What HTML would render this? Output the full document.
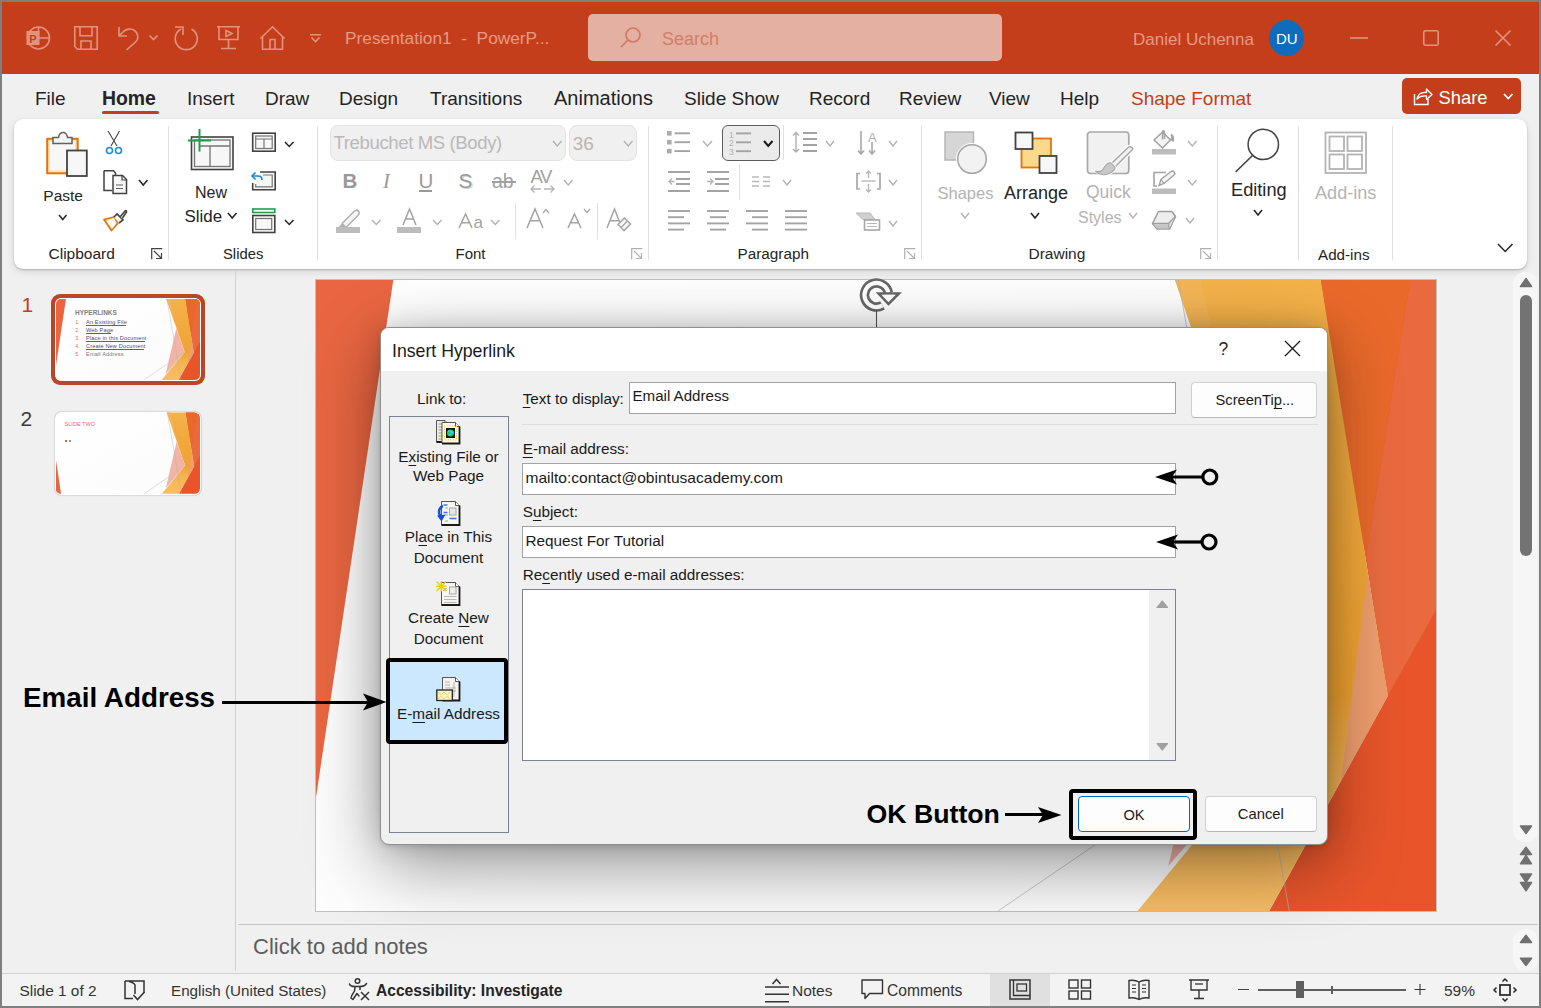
<!DOCTYPE html>
<html><head><meta charset="utf-8"><style>
*{box-sizing:border-box;margin:0;padding:0}
html,body{width:1541px;height:1008px;overflow:hidden;background:#f0f0f0;font-family:"Liberation Sans",sans-serif;color:#242424;position:relative}
.a{position:absolute}
.t{position:absolute;white-space:nowrap;line-height:1}
svg{position:absolute;overflow:visible}
u{text-decoration:underline;text-underline-offset:2.5px;text-decoration-thickness:1px}
.ti{stroke:#e2937e;fill:none;stroke-width:1.6}
</style></head><body>
<div class="a" style="left:0px;top:0px;width:1541px;height:74px;background:#c43e1c"></div>
<svg style="left:26px;top:26px;" width="24" height="24" viewBox="0 0 24 24"><circle cx="12.5" cy="12" r="11" class="ti"/><line x1="12.5" y1="1" x2="12.5" y2="12" class="ti"/><line x1="12.5" y1="12" x2="23.5" y2="12" class="ti"/><rect x="0.5" y="5" width="13" height="14" fill="#e2937e"/><text x="3.2" y="16.5" font-size="11" font-weight="bold" fill="#c43e1c" font-family="Liberation Sans">P</text></svg>
<svg style="left:74px;top:26px;" width="24" height="24" viewBox="0 0 24 24"><path d="M0.8 0.8H23.2V23.2H3.5L0.8 20.5Z" class="ti"/><path d="M6 0.8V9.8H18V0.8" class="ti"/><path d="M7 23.2V15H17V23.2" class="ti"/></svg>
<svg style="left:118px;top:26px;" width="24" height="24" viewBox="0 0 24 24"><path d="M1 1V10H9" class="ti"/><path d="M1 10L5.5 5.5C8 3 13 2 16.5 4.5C20.5 7.5 21 12 18 15.5L8.5 24" class="ti"/></svg>
<svg style="left:149px;top:35px;" width="9" height="6" viewBox="0 0 9 6"><path d="M0.5 0.5L4.5 4.5L8.5 0.5" class="ti"/></svg>
<svg style="left:174px;top:26px;" width="24" height="24" viewBox="0 0 24 24"><path d="M17.5 2A11 11 0 1 1 7 2" class="ti" transform="translate(0,1)"/><path d="M1 1H9V9" class="ti"/></svg>
<svg style="left:217px;top:26px;" width="24" height="24" viewBox="0 0 24 24"><path d="M0 0.8H23M2 0.8V13.5H21V0.8M11.5 13.5V22.5M4 22.5H19" class="ti"/><path d="M9 4.5L15 7.5L9 10.5Z" class="ti"/></svg>
<svg style="left:260px;top:26px;" width="25" height="24" viewBox="0 0 25 24"><path d="M0.5 12.5L12.5 0.8L24.5 12.5M2.5 11V23.2H22.5V11M10 23.2V13.5H15V23.2" class="ti"/></svg>
<svg style="left:310px;top:34px;" width="11" height="9" viewBox="0 0 11 9"><path d="M0 0.8H11M1.5 3.5L5.5 7.5L9.5 3.5" class="ti"/></svg>
<div class="t" style="left:345px;top:30.35px;font-size:17.3px;color:#e69a86;">Presentation1&nbsp; - &nbsp;PowerP...</div>
<div class="a" style="left:588px;top:14px;width:414px;height:47px;background:#e3b0a2;border-radius:5px"></div>
<svg style="left:620px;top:27px;" width="21" height="21" viewBox="0 0 21 21"><circle cx="13" cy="8" r="7" fill="none" stroke="#d07a64" stroke-width="1.7"/><line x1="8" y1="13" x2="1" y2="20" stroke="#d07a64" stroke-width="1.7"/></svg>
<div class="t" style="left:662px;top:29.76px;font-size:18px;color:#d27e68;">Search</div>
<div class="t" style="left:1133px;top:30.61px;font-size:17px;color:#e69a86;">Daniel Uchenna</div>
<div class="a" style="left:1269px;top:20px;width:35px;height:36px;border-radius:50%;background:#0f6cbd"></div>
<div class="t" style="left:1276px;top:30.80px;font-size:15px;color:#fff;">DU</div>
<svg style="left:1350px;top:37px;" width="18" height="2" viewBox="0 0 18 2"><line x1="0" y1="1" x2="18" y2="1" class="ti"/></svg>
<svg style="left:1423px;top:30px;" width="16" height="16" viewBox="0 0 16 16"><rect x="0.8" y="0.8" width="14.4" height="14.4" rx="1.5" class="ti"/></svg>
<svg style="left:1495px;top:30px;" width="16" height="16" viewBox="0 0 16 16"><path d="M0.5 0.5L15.5 15.5M15.5 0.5L0.5 15.5" class="ti"/></svg>
<div class="t" style="left:35px;top:88.91px;font-size:19px;color:#242424;">File</div>
<div class="t" style="left:102px;top:88.57px;font-size:19.4px;color:#242424;font-weight:bold;">Home</div>
<div class="t" style="left:187px;top:88.91px;font-size:19px;color:#242424;">Insert</div>
<div class="t" style="left:265px;top:88.91px;font-size:19px;color:#242424;">Draw</div>
<div class="t" style="left:339px;top:88.91px;font-size:19px;color:#242424;">Design</div>
<div class="t" style="left:430px;top:88.91px;font-size:19px;color:#242424;">Transitions</div>
<div class="t" style="left:554px;top:88.07px;font-size:20px;color:#242424;">Animations</div>
<div class="t" style="left:684px;top:88.91px;font-size:19px;color:#242424;">Slide Show</div>
<div class="t" style="left:809px;top:88.91px;font-size:19px;color:#242424;">Record</div>
<div class="t" style="left:899px;top:88.91px;font-size:19px;color:#242424;">Review</div>
<div class="t" style="left:989px;top:88.91px;font-size:19px;color:#242424;">View</div>
<div class="t" style="left:1060px;top:88.91px;font-size:19px;color:#242424;">Help</div>
<div class="t" style="left:1131px;top:88.91px;font-size:19px;color:#c43e1c;">Shape Format</div>
<div class="a" style="left:102px;top:110.5px;width:57px;height:3px;border-radius:2px;background:#c43e1c"></div>
<div class="a" style="left:1401.5px;top:77.5px;width:119.5px;height:36.5px;background:#c43e1c;border-radius:5px"></div>
<svg style="left:1413px;top:87px;" width="21" height="19" viewBox="0 0 21 19"><path d="M1.5 7V17.5H15V11.5" fill="none" stroke="#fff" stroke-width="1.4"/><path d="M4 12C5 7.5 8.5 5 13.5 5.5V2L19 7.5L13.5 12.5V9C9 8.5 6 10 4 12Z" fill="none" stroke="#fff" stroke-width="1.3" stroke-linejoin="round"/></svg>
<div class="t" style="left:1438.5px;top:88.62px;font-size:18.4px;color:#fff;">Share</div>
<svg style="left:1503px;top:93px;" width="10.5" height="6.5" viewBox="0 0 10.5 6.5"><path d="M1 1L5.25 5.5L9.5 1" fill="none" stroke="#fff" stroke-width="1.8"/></svg>
<div class="a" style="left:14px;top:119px;width:1513px;height:150px;background:#fff;border-radius:9px;box-shadow:0 1px 2px rgba(0,0,0,.22),0 3px 9px rgba(0,0,0,.1)"></div>
<div class="a" style="left:168px;top:126px;width:1px;height:134px;background:#e0e0e0"></div>
<div class="a" style="left:317px;top:126px;width:1px;height:134px;background:#e0e0e0"></div>
<div class="a" style="left:648px;top:126px;width:1px;height:134px;background:#e0e0e0"></div>
<div class="a" style="left:921px;top:126px;width:1px;height:134px;background:#e0e0e0"></div>
<div class="a" style="left:1217px;top:126px;width:1px;height:134px;background:#e0e0e0"></div>
<div class="a" style="left:1298px;top:126px;width:1px;height:134px;background:#e0e0e0"></div>
<div class="a" style="left:1392px;top:126px;width:1px;height:134px;background:#e0e0e0"></div>
<div class="t" style="left:48.5px;top:245.88px;font-size:15.5px;color:#242424;">Clipboard</div>
<div class="t" style="left:223px;top:246.97px;font-size:14.8px;color:#242424;">Slides</div>
<div class="t" style="left:455.5px;top:246.00px;font-size:15px;color:#242424;">Font</div>
<div class="t" style="left:737.5px;top:245.75px;font-size:15.3px;color:#242424;">Paragraph</div>
<div class="t" style="left:1028.5px;top:245.88px;font-size:15.5px;color:#242424;">Drawing</div>
<div class="t" style="left:1318px;top:246.63px;font-size:15.2px;color:#242424;">Add-ins</div>
<svg style="left:151px;top:248px;" width="12" height="12" viewBox="0 0 12 12"><path d="M0.7 11.3V0.7H11.3" fill="none" stroke="#424242" stroke-width="1.2"/><path d="M3 3L10.5 10.5M5 10.5H10.5V5" fill="none" stroke="#424242" stroke-width="1.2"/></svg>
<svg style="left:631px;top:248px;" width="12" height="12" viewBox="0 0 12 12"><path d="M0.7 11.3V0.7H11.3" fill="none" stroke="#b0b0b0" stroke-width="1.2"/><path d="M3 3L10.5 10.5M5 10.5H10.5V5" fill="none" stroke="#b0b0b0" stroke-width="1.2"/></svg>
<svg style="left:904px;top:248px;" width="12" height="12" viewBox="0 0 12 12"><path d="M0.7 11.3V0.7H11.3" fill="none" stroke="#b0b0b0" stroke-width="1.2"/><path d="M3 3L10.5 10.5M5 10.5H10.5V5" fill="none" stroke="#b0b0b0" stroke-width="1.2"/></svg>
<svg style="left:1200px;top:248px;" width="12" height="12" viewBox="0 0 12 12"><path d="M0.7 11.3V0.7H11.3" fill="none" stroke="#b0b0b0" stroke-width="1.2"/><path d="M3 3L10.5 10.5M5 10.5H10.5V5" fill="none" stroke="#b0b0b0" stroke-width="1.2"/></svg>
<svg style="left:1497px;top:243px;" width="17" height="10" viewBox="0 0 17 10"><path d="M1 1L8.2 8.5L15.5 1" fill="none" stroke="#242424" stroke-width="1.5"/></svg>
<svg style="left:44px;top:130px;" width="46" height="48" viewBox="0 0 46 48"><rect x="3.2" y="8.8" width="30.5" height="34.5" fill="#fce3a8" stroke="#e3740c" stroke-width="2"/><rect x="6" y="11.5" width="25" height="29" fill="#f7f7f7"/><path d="M9 13.5V7.5H14.5C15 4 17 2.5 19 2.5C21 2.5 23 4 23.5 7.5H28V13.5Z" fill="#f3f3f3" stroke="#616161" stroke-width="1.5"/><rect x="23" y="20.5" width="19.8" height="25.5" fill="#f7f7f7" stroke="#424242" stroke-width="1.8"/></svg>
<div class="t" style="left:43.3px;top:187.58px;font-size:15.5px;color:#242424;">Paste</div>
<svg style="left:57.5px;top:214px;" width="9.5" height="6.5" viewBox="0 0 9.5 6.5"><path d="M1 1L4.75 5.5L8.5 1" fill="none" stroke="#242424" stroke-width="1.5"/></svg>
<svg style="left:105px;top:130px;" width="20" height="26" viewBox="0 0 20 26"><path d="M3 1L12 16M14.5 1L6 16" fill="none" stroke="#424242" stroke-width="1.1"/><circle cx="4.5" cy="20.5" r="3" fill="none" stroke="#1b8cd8" stroke-width="1.6"/><circle cx="13.5" cy="20.5" r="3" fill="none" stroke="#1b8cd8" stroke-width="1.6"/></svg>
<svg style="left:103px;top:170px;" width="25" height="25" viewBox="0 0 25 25"><path d="M1 0.8H10.5L12.5 3V5M1 0.8V20.5H9" fill="none" stroke="#424242" stroke-width="1.5"/><path d="M10 5.5H19.5L23.5 9.5V23.5H10Z" fill="#f7f7f7" stroke="#424242" stroke-width="1.5"/><path d="M19 5.5V10H23.5" fill="none" stroke="#424242" stroke-width="1.2"/><path d="M13 15H20M13 18.5H20" stroke="#616161" stroke-width="1.2"/></svg>
<svg style="left:138px;top:179px;" width="10.5" height="7" viewBox="0 0 10.5 7"><path d="M1 1L5.25 6L9.5 1" fill="none" stroke="#242424" stroke-width="1.5"/></svg>
<svg style="left:103px;top:208px;" width="25" height="25" viewBox="0 0 25 25"><path d="M1 11.5L8.5 22.5L15 15L11 9Z" fill="#fcd385" stroke="#e3740c" stroke-width="1.8" stroke-linejoin="round"/><path d="M3.5 13L11 10L13 15.5L9 21Z" fill="#fff"/><path d="M11 9L14 6L20 12L16 15" fill="#f7f7f7" stroke="#424242" stroke-width="1.6"/><path d="M17 9L22 3C23 2 24 3 23.5 4L19.5 10" fill="#f7f7f7" stroke="#424242" stroke-width="1.6"/></svg>
<svg style="left:186px;top:128px;" width="50" height="44" viewBox="0 0 50 44"><rect x="5.5" y="9" width="41.5" height="32.5" fill="#f7f7f7" stroke="#424242" stroke-width="1.6"/><rect x="8.5" y="12" width="35.5" height="26.5" fill="#f7f7f7" stroke="#757575" stroke-width="1.3"/><path d="M14 18H44M24 18V38.5" stroke="#757575" stroke-width="1.3"/><path d="M2 12.5H25M13.5 1V23.5" stroke="#1f9e4b" stroke-width="2"/></svg>
<div class="t" style="left:195px;top:185.05px;font-size:16px;color:#242424;">New</div>
<div class="t" style="left:184.5px;top:208.59px;font-size:16.9px;color:#242424;">Slide</div>
<svg style="left:227px;top:212px;" width="10.5" height="7" viewBox="0 0 10.5 7"><path d="M1 1L5.25 6L9.5 1" fill="none" stroke="#242424" stroke-width="1.5"/></svg>
<svg style="left:251px;top:132px;" width="26" height="21" viewBox="0 0 26 21"><rect x="1.7" y="1.2" width="22.5" height="18" fill="#f7f7f7" stroke="#424242" stroke-width="1.6"/><rect x="4.7" y="4" width="16.5" height="12.5" fill="none" stroke="#757575" stroke-width="1.2"/><path d="M4.7 7H21M13 7V16.5" stroke="#757575" stroke-width="1.2"/></svg>
<svg style="left:284px;top:140.5px;" width="10.5" height="6.5" viewBox="0 0 10.5 6.5"><path d="M1 1L5.25 5.5L9.5 1" fill="none" stroke="#242424" stroke-width="1.5"/></svg>
<svg style="left:251px;top:170px;" width="26" height="22" viewBox="0 0 26 22"><path d="M9 2H24.2V19.8H1.7V13" fill="#f7f7f7" stroke="#424242" stroke-width="1.6"/><path d="M12 5H21.2V16.8H4.7V14" fill="none" stroke="#757575" stroke-width="1.2"/><path d="M1.5 6H7C9.5 6 11 7.8 11 10" fill="none" stroke="#1b8cd8" stroke-width="1.7"/><path d="M4.5 2.5L1 6L4.5 9.5" fill="none" stroke="#1b8cd8" stroke-width="1.7"/></svg>
<svg style="left:251px;top:208px;" width="26" height="26" viewBox="0 0 26 26"><rect x="1.8" y="1" width="22" height="3.5" fill="#fff" stroke="#1f9e4b" stroke-width="1.6"/><rect x="1.8" y="7.5" width="22" height="17" fill="#f7f7f7" stroke="#424242" stroke-width="1.6"/><rect x="4.7" y="10.5" width="16" height="11" fill="none" stroke="#757575" stroke-width="1.2"/></svg>
<svg style="left:284px;top:218.5px;" width="10.5" height="6.5" viewBox="0 0 10.5 6.5"><path d="M1 1L5.25 5.5L9.5 1" fill="none" stroke="#242424" stroke-width="1.5"/></svg>
<div class="a" style="left:330px;top:125px;width:236px;height:35.5px;background:#f0f0f0;border:1px solid #e3e3e3;border-radius:8px"></div>
<div class="t" style="left:333.5px;top:134.35px;font-size:18.6px;color:#b9b9b9;letter-spacing:-0.4px">Trebuchet MS (Body)</div>
<svg style="left:552px;top:140px;" width="10.5" height="7" viewBox="0 0 10.5 7"><path d="M1 1L5.25 6L9.5 1" fill="none" stroke="#b0b0b0" stroke-width="1.3"/></svg>
<div class="a" style="left:569px;top:125px;width:67.5px;height:35.5px;background:#f0f0f0;border:1px solid #e3e3e3;border-radius:8px"></div>
<div class="t" style="left:572.8px;top:134.01px;font-size:19px;color:#bdb5ae;">36</div>
<svg style="left:623px;top:140px;" width="10.5" height="7" viewBox="0 0 10.5 7"><path d="M1 1L5.25 6L9.5 1" fill="none" stroke="#b0b0b0" stroke-width="1.3"/></svg>
<div class="t" style="left:342.5px;top:170.64px;font-size:20.5px;color:#999;font-weight:bold;">B</div>
<div class="t" style="left:383px;top:170.64px;font-size:20.5px;color:#999;font-family:'Liberation Serif';font-style:italic">I</div>
<div class="t" style="left:418.5px;top:170.64px;font-size:20.5px;color:#999;">U</div>
<div class="a" style="left:418.5px;top:190px;width:13px;height:2px;background:#999"></div>
<div class="t" style="left:460px;top:172.14px;font-size:20.5px;color:#d6d6d6;">S</div>
<div class="t" style="left:458.5px;top:170.64px;font-size:20.5px;color:#999;">S</div>
<div class="t" style="left:492px;top:172.49px;font-size:19.5px;color:#a0a0a0;">ab</div>
<div class="a" style="left:491.5px;top:181px;width:24px;height:1.8px;background:#a0a0a0"></div>
<div class="t" style="left:530.5px;top:168.04px;font-size:18.5px;color:#a0a0a0;letter-spacing:-1.5px">AV</div>
<svg style="left:530px;top:184px;" width="26" height="10" viewBox="0 0 26 10"><path d="M1 5H11M4.5 1.5L1 5L4.5 8.5M14 5H24M20.5 1.5L24 5L20.5 8.5" fill="none" stroke="#b5b5b5" stroke-width="1.3"/></svg>
<svg style="left:563px;top:179px;" width="10.5" height="7" viewBox="0 0 10.5 7"><path d="M1 1L5.25 6L9.5 1" fill="none" stroke="#b0b0b0" stroke-width="1.3"/></svg>
<svg style="left:336px;top:208px;" width="25" height="26" viewBox="0 0 25 26"><path d="M6.5 15L18 3.5C19.5 2 21.5 2 22.5 3C23.5 4 23.5 6 22 7.5L10.5 19H6.5Z" fill="#f4f4f4" stroke="#b0b0b0" stroke-width="1.5"/><path d="M6.5 15L2 19.5H7.5L10.5 19" fill="#b0b0b0"/><rect x="0" y="19" width="24" height="6" fill="#bcbcbc"/></svg>
<svg style="left:371px;top:218.5px;" width="10.5" height="6.5" viewBox="0 0 10.5 6.5"><path d="M1 1L5.25 5.5L9.5 1" fill="none" stroke="#b0b0b0" stroke-width="1.3"/></svg>
<div class="a" style="left:397px;top:227.2px;width:24px;height:5.6px;background:#bcbcbc"></div>
<svg style="left:432px;top:218.5px;" width="10.5" height="6.5" viewBox="0 0 10.5 6.5"><path d="M1 1L5.25 5.5L9.5 1" fill="none" stroke="#b0b0b0" stroke-width="1.3"/></svg>
<svg style="left:490px;top:218.5px;" width="10.5" height="6.5" viewBox="0 0 10.5 6.5"><path d="M1 1L5.25 5.5L9.5 1" fill="none" stroke="#b0b0b0" stroke-width="1.3"/></svg>
<svg style="left:402px;top:208px;" width="15" height="18" viewBox="0 0 15 18"><path d="M1 17L7.5 1L14 17M3.6 10.92H11.4" fill="none" stroke="#a3a3a3" stroke-width="1.5"/></svg>
<svg style="left:458px;top:213px;" width="15" height="16" viewBox="0 0 15 16"><path d="M1 15L7.5 1L14 15M3.6 9.68H11.4" fill="none" stroke="#a3a3a3" stroke-width="1.5"/></svg>
<div class="t" style="left:473.5px;top:213.61px;font-size:17px;color:#a3a3a3;">a</div>
<svg style="left:526px;top:208px;" width="18" height="21" viewBox="0 0 18 21"><path d="M1 20L9.0 1L17 20M4.2 12.78H13.8" fill="none" stroke="#a3a3a3" stroke-width="1.5"/></svg>
<svg style="left:567px;top:213px;" width="15" height="16" viewBox="0 0 15 16"><path d="M1 15L7.5 1L14 15M3.6 9.68H11.4" fill="none" stroke="#a3a3a3" stroke-width="1.5"/></svg>
<svg style="left:606px;top:208px;" width="17" height="21" viewBox="0 0 17 21"><path d="M1 20L8.5 1L16 20M4.0 12.78H13.0" fill="none" stroke="#a3a3a3" stroke-width="1.5"/></svg>
<div class="a" style="left:515px;top:203px;width:1px;height:35.5px;background:#e0e0e0"></div>
<svg style="left:542px;top:208px;" width="8" height="6" viewBox="0 0 8 6"><path d="M1 5L4 1.5L7 5" fill="none" stroke="#a8a8a8" stroke-width="1.3"/></svg>
<svg style="left:583px;top:208px;" width="8" height="6" viewBox="0 0 8 6"><path d="M1 1L4 4.5L7 1" fill="none" stroke="#a8a8a8" stroke-width="1.3"/></svg>
<div class="a" style="left:597px;top:203px;width:1px;height:35.5px;background:#e0e0e0"></div>
<svg style="left:617px;top:217px;" width="15" height="15" viewBox="0 0 15 15"><path d="M7.5 1L13.5 7L7 13.5L1 7.5Z" fill="#f7f7f7" stroke="#a8a8a8" stroke-width="1.6"/><path d="M4 10.5L10.5 4" stroke="#a8a8a8" stroke-width="1.4"/></svg>
<svg style="left:666px;top:131px;" width="26" height="24" viewBox="0 0 26 24"><rect x="1" y="0.0" width="4.6" height="4.6" fill="#ababab"/><line x1="8.5" y1="2.3" x2="24" y2="2.3" stroke="#a3a3a3" stroke-width="1.9"/><rect x="1" y="8.9" width="4.6" height="4.6" fill="#ababab"/><line x1="8.5" y1="11.2" x2="24" y2="11.2" stroke="#a3a3a3" stroke-width="1.9"/><rect x="1" y="17.8" width="4.6" height="4.6" fill="#ababab"/><line x1="8.5" y1="20.1" x2="24" y2="20.1" stroke="#a3a3a3" stroke-width="1.9"/></svg>
<svg style="left:702px;top:140px;" width="11" height="7" viewBox="0 0 11 7"><path d="M1 1L5.5 6L10 1" fill="none" stroke="#b0b0b0" stroke-width="1.3"/></svg>
<div class="a" style="left:722px;top:125px;width:58px;height:35.5px;background:#ebebeb;border:1.2px solid #5c5c5c;border-radius:6px"></div>
<svg style="left:728px;top:130px;" width="26" height="26" viewBox="0 0 26 26"><text x="1" y="7.5" font-size="8.5" fill="#b0b0b0" font-family="Liberation Sans">1</text><line x1="8" y1="3.4" x2="23" y2="3.4" stroke="#a3a3a3" stroke-width="1.9"/><text x="1" y="16.4" font-size="8.5" fill="#b0b0b0" font-family="Liberation Sans">2</text><line x1="8" y1="12.3" x2="23" y2="12.3" stroke="#a3a3a3" stroke-width="1.9"/><text x="1" y="25.3" font-size="8.5" fill="#b0b0b0" font-family="Liberation Sans">3</text><line x1="8" y1="21.2" x2="23" y2="21.2" stroke="#a3a3a3" stroke-width="1.9"/></svg>
<svg style="left:763px;top:140px;" width="10.5" height="7" viewBox="0 0 10.5 7"><path d="M1 1L5.25 6L9.5 1" fill="none" stroke="#1a1a1a" stroke-width="2"/></svg>
<div class="a" style="left:783px;top:125px;width:1px;height:35px;background:#e0e0e0"></div>
<svg style="left:792px;top:131px;" width="26" height="24" viewBox="0 0 26 24"><path d="M4 1.5V21M1 4.5L4 1.5L7 4.5M1 18L4 21L7 18" fill="none" stroke="#b0b0b0" stroke-width="1.4"/><path d="M11 2H25M11 8H25M11 14H25M11 20H25" stroke="#a3a3a3" stroke-width="1.9"/></svg>
<svg style="left:825px;top:140px;" width="10" height="7" viewBox="0 0 10 7"><path d="M1 1L5.0 6L9 1" fill="none" stroke="#b0b0b0" stroke-width="1.3"/></svg>
<svg style="left:857px;top:130px;" width="24" height="26" viewBox="0 0 24 26"><path d="M4 1V24M1 20.5L4 24L7 20.5" fill="none" stroke="#a8a8a8" stroke-width="1.6"/><path d="M15 24V12M12 20.5L15 24L18 20.5" fill="none" stroke="#a8a8a8" stroke-width="1.6"/><text x="11" y="11.5" font-size="13" fill="#b0b0b0" font-family="Liberation Sans">A</text></svg>
<svg style="left:888px;top:140px;" width="10" height="7" viewBox="0 0 10 7"><path d="M1 1L5.0 6L9 1" fill="none" stroke="#b0b0b0" stroke-width="1.3"/></svg>
<svg style="left:668px;top:171px;" width="23" height="21" viewBox="0 0 23 21"><path d="M0 1H22M8 8H22M8 13H22M0 20H22" stroke="#a3a3a3" stroke-width="1.9"/><path d="M6.5 10.5H1M4 7.5L1 10.5L4 13.5" fill="none" stroke="#b5b5b5" stroke-width="1.4"/></svg>
<svg style="left:707px;top:171px;" width="23" height="21" viewBox="0 0 23 21"><path d="M0 1H22M8 8H22M8 13H22M0 20H22" stroke="#a3a3a3" stroke-width="1.9"/><path d="M0 10.5H5.5M3 7.5L6 10.5L3 13.5" fill="none" stroke="#b5b5b5" stroke-width="1.4"/></svg>
<div class="a" style="left:739px;top:164px;width:1px;height:36px;background:#e0e0e0"></div>
<svg style="left:752px;top:176px;" width="19" height="11" viewBox="0 0 19 11"><path d="M0 1H7M11 1H18M0 5.5H7M11 5.5H18M0 10H7M11 10H18" stroke="#b8b8b8" stroke-width="1.5"/></svg>
<svg style="left:781.5px;top:179px;" width="10" height="7" viewBox="0 0 10 7"><path d="M1 1L5.0 6L9 1" fill="none" stroke="#b0b0b0" stroke-width="1.3"/></svg>
<svg style="left:856px;top:170px;" width="25" height="23" viewBox="0 0 25 23"><path d="M4 3.5H1V19H4M21 3.5H24V19H21" fill="none" stroke="#a8a8a8" stroke-width="1.7"/><path d="M5.5 11H19.5" stroke="#b8b8b8" stroke-width="1.4"/><path d="M12.5 1V8M10 3.5L12.5 1L15 3.5M12.5 14V22M10 19.5L12.5 22L15 19.5" fill="none" stroke="#b8b8b8" stroke-width="1.4"/></svg>
<svg style="left:888px;top:179px;" width="10" height="7" viewBox="0 0 10 7"><path d="M1 1L5.0 6L9 1" fill="none" stroke="#b0b0b0" stroke-width="1.3"/></svg>
<svg style="left:668px;top:210px;" width="23" height="21" viewBox="0 0 23 21"><line x1="0" y1="1.0" x2="22" y2="1.0" stroke="#a3a3a3" stroke-width="1.9"/><line x1="0" y1="7.2" x2="16" y2="7.2" stroke="#a3a3a3" stroke-width="1.9"/><line x1="0" y1="13.4" x2="22" y2="13.4" stroke="#a3a3a3" stroke-width="1.9"/><line x1="0" y1="19.6" x2="16" y2="19.6" stroke="#a3a3a3" stroke-width="1.9"/></svg>
<svg style="left:707px;top:210px;" width="23" height="21" viewBox="0 0 23 21"><line x1="0.0" y1="1.0" x2="22.0" y2="1.0" stroke="#a3a3a3" stroke-width="1.9"/><line x1="3.0" y1="7.2" x2="19.0" y2="7.2" stroke="#a3a3a3" stroke-width="1.9"/><line x1="0.0" y1="13.4" x2="22.0" y2="13.4" stroke="#a3a3a3" stroke-width="1.9"/><line x1="3.0" y1="19.6" x2="19.0" y2="19.6" stroke="#a3a3a3" stroke-width="1.9"/></svg>
<svg style="left:746px;top:210px;" width="23" height="21" viewBox="0 0 23 21"><line x1="0" y1="1.0" x2="22" y2="1.0" stroke="#a3a3a3" stroke-width="1.9"/><line x1="6" y1="7.2" x2="22" y2="7.2" stroke="#a3a3a3" stroke-width="1.9"/><line x1="0" y1="13.4" x2="22" y2="13.4" stroke="#a3a3a3" stroke-width="1.9"/><line x1="6" y1="19.6" x2="22" y2="19.6" stroke="#a3a3a3" stroke-width="1.9"/></svg>
<svg style="left:785px;top:210px;" width="23" height="21" viewBox="0 0 23 21"><line x1="0" y1="1.0" x2="22" y2="1.0" stroke="#a3a3a3" stroke-width="1.9"/><line x1="0" y1="7.2" x2="22" y2="7.2" stroke="#a3a3a3" stroke-width="1.9"/><line x1="0" y1="13.4" x2="22" y2="13.4" stroke="#a3a3a3" stroke-width="1.9"/><line x1="0" y1="19.6" x2="22" y2="19.6" stroke="#a3a3a3" stroke-width="1.9"/></svg>
<svg style="left:855px;top:212px;" width="26" height="19" viewBox="0 0 26 19"><path d="M1 1H15L20 7.5H8Z" fill="#d0d0d0" stroke="#b8b8b8" stroke-width="1"/><rect x="9.5" y="8" width="15" height="10" fill="#fff" stroke="#a8a8a8" stroke-width="1.6"/><path d="M12 11.5H22M12 14.5H22" stroke="#b8b8b8" stroke-width="1.2"/></svg>
<svg style="left:888px;top:220px;" width="10" height="7" viewBox="0 0 10 7"><path d="M1 1L5.0 6L9 1" fill="none" stroke="#b0b0b0" stroke-width="1.3"/></svg>
<svg style="left:944px;top:131px;" width="32" height="44" viewBox="0 0 32 44"><rect x="1" y="1" width="28.5" height="28" fill="#d6d6d6" stroke="#b3b3b3" stroke-width="1.4"/><circle cx="28" cy="28" r="16" fill="#fff"/><circle cx="28" cy="28" r="14.3" fill="#f2f2f2" stroke="#a6a6a6" stroke-width="1.5"/></svg>
<div class="t" style="left:937.5px;top:185.33px;font-size:16.5px;color:#b3b3b3;">Shapes</div>
<svg style="left:960px;top:212px;" width="10" height="7" viewBox="0 0 10 7"><path d="M1 1L5.0 6L9 1" fill="none" stroke="#b0b0b0" stroke-width="1.3"/></svg>
<svg style="left:1014px;top:131px;" width="44" height="44" viewBox="0 0 44 44"><rect x="7.5" y="7.5" width="29.5" height="29" fill="#fad98c" stroke="#e3740c" stroke-width="1.8"/><rect x="1.5" y="1.5" width="17" height="16.5" fill="#f7f7f7" stroke="#424242" stroke-width="1.8"/><rect x="25.5" y="25" width="17" height="17" fill="#f7f7f7" stroke="#424242" stroke-width="1.8"/></svg>
<div class="t" style="left:1004px;top:184.06px;font-size:18px;color:#242424;">Arrange</div>
<svg style="left:1030px;top:212px;" width="10" height="7" viewBox="0 0 10 7"><path d="M1 1L5.0 6L9 1" fill="none" stroke="#242424" stroke-width="1.6"/></svg>
<svg style="left:1086px;top:130px;" width="50" height="50" viewBox="0 0 50 50"><rect x="1.5" y="2" width="41.3" height="41.5" rx="3" fill="#f1f1f1" stroke="#a8a8a8" stroke-width="1.7"/><path d="M46 17.5C47 18 47 19 46 20L29 37L25 34L42 17.5C43.5 16.5 45 16.8 46 17.5Z" fill="#f1f1f1" stroke="#fff" stroke-width="4"/><path d="M46 17.5C47 18 47 19 46 20L29 37L25 34L42 17.5C43.5 16.5 45 16.8 46 17.5Z" fill="#f1f1f1" stroke="#a8a8a8" stroke-width="1.5"/><path d="M25 33C20 32 19 37 16.5 40C14.5 42 12 42 9.5 41C12 44 17 45.5 22 44C27 42.5 29.5 39 29 37Z" fill="#c9c9c9" stroke="#fff" stroke-width="2.5"/><path d="M25 33C20 32 19 37 16.5 40C14.5 42 12 42 9.5 41C12 44 17 45.5 22 44C27 42.5 29.5 39 29 37Z" fill="#c9c9c9" stroke="#a8a8a8" stroke-width="1.2"/></svg>
<div class="t" style="left:1086px;top:184.48px;font-size:17.5px;color:#b3b3b3;">Quick</div>
<div class="t" style="left:1078px;top:209.65px;font-size:16px;color:#b3b3b3;">Styles</div>
<svg style="left:1128px;top:212px;" width="10" height="7" viewBox="0 0 10 7"><path d="M1 1L5.0 6L9 1" fill="none" stroke="#b0b0b0" stroke-width="1.3"/></svg>
<svg style="left:1151px;top:130px;" width="26" height="26" viewBox="0 0 26 26"><path d="M3 10L11.5 2L19.5 10L11.5 18Z" fill="#f4f4f4" stroke="#a3a3a3" stroke-width="1.6" stroke-linejoin="round"/><path d="M11.5 9.5V1.5C11.5 0.5 13.5 0.5 13.5 1.5V9" fill="none" stroke="#a3a3a3" stroke-width="1.5"/><path d="M19.5 10C21 8 21.5 6 20 4.5C21.5 5 23.5 7 22 11.5" fill="#a3a3a3" stroke="#a3a3a3" stroke-width="1.4"/><rect x="1" y="19" width="24" height="5.5" fill="#bcbcbc"/></svg>
<svg style="left:1187px;top:140px;" width="10.5" height="7" viewBox="0 0 10.5 7"><path d="M1 1L5.25 6L9.5 1" fill="none" stroke="#b0b0b0" stroke-width="1.3"/></svg>
<svg style="left:1151px;top:170px;" width="26" height="26" viewBox="0 0 26 26"><path d="M15 2.5H3V16H6" fill="none" stroke="#a3a3a3" stroke-width="1.6"/><path d="M8 15.5L10 9.5L20 1.5C21 0.8 22.5 1 23.2 2C24 3 23.8 4.2 23 5L13 13.5Z" fill="#f4f4f4" stroke="#a3a3a3" stroke-width="1.4"/><path d="M10 9.5L13 13.5" stroke="#a3a3a3" stroke-width="1.2"/><rect x="1" y="18.5" width="24" height="5.5" fill="#bcbcbc"/></svg>
<svg style="left:1187px;top:179px;" width="10.5" height="7" viewBox="0 0 10.5 7"><path d="M1 1L5.25 6L9.5 1" fill="none" stroke="#b0b0b0" stroke-width="1.3"/></svg>
<svg style="left:1151px;top:210px;" width="26" height="22" viewBox="0 0 26 22"><path d="M1.5 13.5L7.5 1.5H21L24.5 6.5L18.5 19H6Z" fill="#eeeeee" stroke="#9e9e9e" stroke-width="1.6" stroke-linejoin="round"/><path d="M1.5 13.5H17.5L24.5 6.5" fill="none" stroke="#9e9e9e" stroke-width="1.6"/><path d="M2.3 14.3L6 18.2H18L17.2 14.3Z" fill="#c6c6c6"/><path d="M17.5 13.5L18.5 19" stroke="#9e9e9e" stroke-width="1.4"/><path d="M18.3 14L23.6 7.5L18.5 18Z" fill="#dcdcdc"/></svg>
<svg style="left:1185px;top:217px;" width="10" height="7" viewBox="0 0 10 7"><path d="M1 1L5.0 6L9 1" fill="none" stroke="#b0b0b0" stroke-width="1.3"/></svg>
<svg style="left:1234px;top:128px;" width="46" height="46" viewBox="0 0 46 46"><circle cx="29.3" cy="16.4" r="15.2" fill="none" stroke="#424242" stroke-width="1.5"/><line x1="18.5" y1="27.5" x2="1.6" y2="44" stroke="#424242" stroke-width="1.6"/></svg>
<div class="t" style="left:1231px;top:180.59px;font-size:18.2px;color:#242424;">Editing</div>
<svg style="left:1252.5px;top:209px;" width="10" height="7" viewBox="0 0 10 7"><path d="M1 1L5.0 6L9 1" fill="none" stroke="#242424" stroke-width="1.6"/></svg>
<svg style="left:1324px;top:131px;" width="44" height="44" viewBox="0 0 44 44"><rect x="1.5" y="1.5" width="40.5" height="40.5" fill="#fff" stroke="#b3b3b3" stroke-width="1.8"/><rect x="5.5" y="5.5" width="14.5" height="14.5" fill="none" stroke="#b3b3b3" stroke-width="1.8"/><rect x="23.5" y="5.5" width="14.5" height="14.5" fill="none" stroke="#b3b3b3" stroke-width="1.8"/><rect x="5.5" y="23.5" width="14.5" height="14.5" fill="none" stroke="#b3b3b3" stroke-width="1.8"/><rect x="23.5" y="23.5" width="14.5" height="14.5" fill="none" stroke="#b3b3b3" stroke-width="1.8"/></svg>
<div class="t" style="left:1315px;top:183.87px;font-size:18.1px;color:#b3b3b3;">Add-ins</div>
<div class="a" style="left:235px;top:271px;width:1px;height:700px;background:#d0d0d0"></div>
<div class="a" style="left:238px;top:924px;width:1300px;height:1px;background:#c8c8c8"></div>
<div class="t" style="left:253px;top:936.07px;font-size:22px;color:#5c5c5c;">Click to add notes</div>
<div class="a" style="left:1513px;top:272px;width:25px;height:570px;background:#f6f6f6;border-radius:12px"></div>
<svg style="left:1519px;top:277px;" width="14" height="11" viewBox="0 0 14 11"><path d="M7 1.5L12.5 9.5H1.5Z" fill="#707070" stroke="#707070" stroke-width="1.5" stroke-linejoin="round"/></svg>
<div class="a" style="left:1520px;top:295px;width:12px;height:261px;background:#737373;border-radius:6px"></div>
<svg style="left:1519px;top:825px;" width="14" height="10" viewBox="0 0 14 10"><path d="M7 8.5L12.5 1H1.5Z" fill="#707070" stroke="#707070" stroke-width="1.5" stroke-linejoin="round"/></svg>
<svg style="left:1519px;top:846px;" width="14" height="20" viewBox="0 0 14 20"><path d="M7 1.2L12.5 8.5H1.5Z M7 9.5L12.5 17.8H1.5Z" fill="#707070" stroke="#707070" stroke-width="1.5" stroke-linejoin="round"/></svg>
<svg style="left:1519px;top:872px;" width="14" height="20" viewBox="0 0 14 20"><path d="M7 18.8L12.5 10.5H1.5Z M7 10L12.5 2H1.5Z" fill="#707070" stroke="#707070" stroke-width="1.5" stroke-linejoin="round"/></svg>
<div class="a" style="left:1513px;top:929px;width:25px;height:42px;background:#f6f6f6;border-radius:12px"></div>
<svg style="left:1519px;top:934px;" width="14" height="10" viewBox="0 0 14 10"><path d="M7 1.2L12.5 8.5H1.5Z" fill="#707070" stroke="#707070" stroke-width="1.5" stroke-linejoin="round"/></svg>
<svg style="left:1519px;top:957px;" width="14" height="10" viewBox="0 0 14 10"><path d="M7 8.5L12.5 1.2H1.5Z" fill="#707070" stroke="#707070" stroke-width="1.5" stroke-linejoin="round"/></svg>
<div class="a" style="left:0px;top:973px;width:1541px;height:35px;background:#f3f3f3;border-top:1px solid #d2d2d2"></div>
<div class="t" style="left:19.5px;top:982.76px;font-size:15.4px;color:#333;">Slide 1 of 2</div>
<svg style="left:124px;top:980px;" width="22" height="21" viewBox="0 0 22 21"><path d="M1 1H20V13M1 1V18.5H9M5 1.5C8 2 10 3 11 5V14" fill="none" stroke="#333" stroke-width="1.5"/><path d="M9.5 15L13.5 19.5L20.5 12" fill="none" stroke="#333" stroke-width="1.6"/></svg>
<div class="t" style="left:171px;top:982.93px;font-size:15.2px;color:#333;">English (United States)</div>
<svg style="left:348px;top:978px;" width="22" height="23" viewBox="0 0 22 23"><circle cx="9.5" cy="3" r="2.3" fill="none" stroke="#333" stroke-width="1.5"/><path d="M1.5 6C2 8 4.5 8.5 7 8.5L6.5 13C5.5 15 3.5 17 3 20L5 21.5C6.5 19 8 17 9 15.5L11 18M12 8.5C14.5 8.5 17 8 18.5 5.5" fill="none" stroke="#333" stroke-width="1.5" stroke-linecap="round" stroke-linejoin="round"/><path d="M7 8.5H12L12 12" fill="none" stroke="#333" stroke-width="1.5"/><path d="M13 14L21 22M21 14L13 22" stroke="#333" stroke-width="1.5"/></svg>
<div class="t" style="left:376px;top:982.59px;font-size:15.6px;color:#242424;font-weight:bold;">Accessibility: Investigate</div>
<svg style="left:764px;top:978px;" width="26" height="25" viewBox="0 0 26 25"><path d="M1 9H25M1 16.3H25M1 23.8H25" stroke="#333" stroke-width="1.5"/><path d="M8.5 6L12.5 1.5L16.5 6" fill="none" stroke="#333" stroke-width="1.5"/></svg>
<div class="t" style="left:792px;top:982.68px;font-size:15.5px;color:#333;">Notes</div>
<svg style="left:861px;top:979px;" width="23" height="21" viewBox="0 0 23 21"><path d="M1 1H21.5V14.5H8.5L4 19.5V14.5H1Z" fill="none" stroke="#333" stroke-width="1.4" stroke-linejoin="round"/></svg>
<div class="t" style="left:887px;top:982.59px;font-size:15.6px;color:#333;">Comments</div>
<div class="a" style="left:990px;top:974px;width:60px;height:32px;background:#e0e0e0"></div>
<svg style="left:1009px;top:979px;" width="22" height="21" viewBox="0 0 22 21"><path d="M1 1H21V20H1Z" fill="none" stroke="#333" stroke-width="1.5"/><path d="M4.5 1V16.5H21" fill="none" stroke="#333" stroke-width="1.3"/><rect x="8" y="5" width="9.5" height="7" fill="none" stroke="#333" stroke-width="1.3"/></svg>
<svg style="left:1068px;top:979px;" width="24" height="21" viewBox="0 0 24 21"><rect x="1" y="1" width="9" height="8" fill="none" stroke="#333" stroke-width="1.4"/><rect x="13.5" y="1" width="9" height="8" fill="none" stroke="#333" stroke-width="1.4"/><rect x="1" y="12" width="9" height="8" fill="none" stroke="#333" stroke-width="1.4"/><rect x="13.5" y="12" width="9" height="8" fill="none" stroke="#333" stroke-width="1.4"/></svg>
<svg style="left:1128px;top:979px;" width="22" height="21" viewBox="0 0 22 21"><path d="M11 3C8 1.2 4 1 1 1.5V19C4 18.5 8 18.7 11 20.5C14 18.7 18 18.5 21 19V1.5C18 1 14 1.2 11 3ZM11 3V20.5" fill="none" stroke="#333" stroke-width="1.4"/><path d="M4 6H8M4 9.5H8M4 13H8M14 6H18M14 9.5H18M14 13H18" stroke="#333" stroke-width="1.2"/></svg>
<svg style="left:1189px;top:979px;" width="21" height="21" viewBox="0 0 21 21"><path d="M0 1H20M2 1V11H18V1M10 11V19.5M5 19.5H15" fill="none" stroke="#333" stroke-width="1.4"/><path d="M6 5H14" stroke="#333" stroke-width="1.3"/></svg>
<div class="a" style="left:1238px;top:988.5px;width:11px;height:1.4px;background:#444"></div>
<div class="a" style="left:1258px;top:988.8px;width:148px;height:2px;background:#5f5f5f"></div>
<div class="a" style="left:1296px;top:981px;width:8px;height:17px;background:#5f5f5f"></div>
<div class="a" style="left:1331px;top:986px;width:1.6px;height:8px;background:#5f5f5f"></div>
<svg style="left:1413.5px;top:984px;" width="12" height="12" viewBox="0 0 12 12"><path d="M6 0V11M0.5 5.5H11.5" stroke="#333" stroke-width="1.1"/></svg>
<div class="t" style="left:1444px;top:982.68px;font-size:15.5px;color:#333;">59%</div>
<svg style="left:1493px;top:978px;" width="24" height="24" viewBox="0 0 24 24"><rect x="7" y="7" width="10" height="10" fill="none" stroke="#242424" stroke-width="1.7"/><path d="M9.5 3.5L12 1L14.5 3.5M9.5 20.5L12 23L14.5 20.5M3.5 9.5L1 12L3.5 14.5M20.5 9.5L23 12L20.5 14.5" fill="none" stroke="#242424" stroke-width="1.5"/></svg>
<div class="a" style="left:0;top:0;width:1541px;height:1008px;border:2px solid #7f7f7f;z-index:50"></div>
<div class="a" style="left:315px;top:278.5px;width:1122px;height:633px;background:#c0c0c0"></div>
<svg style="left:316px;top:279.5px;" width="1120" height="631" viewBox="0 0 1120 631"><defs><linearGradient id="bgm" x1="0" y1="0" x2="1" y2="1"><stop offset="0" stop-color="#ffffff"/><stop offset="1" stop-color="#fbfbfb"/></linearGradient><linearGradient id="ogm" x1="0" y1="0" x2="0" y2="1"><stop offset="0" stop-color="#f4b24a"/><stop offset="1" stop-color="#f0a02c"/></linearGradient><linearGradient id="ygm" x1="0" y1="0" x2="0" y2="1"><stop offset="0" stop-color="#f0a232"/><stop offset="0.4" stop-color="#f5b552"/><stop offset="1" stop-color="#f8bd64"/></linearGradient></defs><rect x="0" y="0" width="1120" height="631" fill="url(#bgm)"/><polygon points="0.00,0.00 77.28,0.00 0.00,517.42" fill="#e96641"/><polygon points="1004.64,0.00 1120.00,0.00 1120.00,631.00 953.12,631.00 1071.84,415.83" fill="#e8552b"/><polygon points="1094.24,0.00 1120.00,0.00 1120.00,330.01 1071.84,415.83 1050.00,277.01" fill="#ea6a3f"/><polygon points="1004.64,0.00 1094.24,0.00 1050.00,277.01 1030.40,189.30" fill="#e9692a"/><polygon points="859.04,0.00 1004.64,0.00 1071.84,415.83 1032.64,461.89 1001.28,413.31" fill="url(#ogm)"/><polygon points="859.04,0.00 884.80,0.00 929.60,208.23" fill="#f4b555"/><polygon points="821.52,631.00 953.12,631.00 1071.84,415.83 1001.28,413.31" fill="url(#ygm)"/><polygon points="935.76,227.79 1001.28,413.31 852.32,585.95" fill="#f3b4a5"/><polygon points="1051.68,294.05 1071.84,415.83 1024.80,501.01" fill="#ee9e6e"/><line x1="862.4" y1="0" x2="973.28" y2="631" stroke="#b0b0b0" stroke-opacity="0.7" stroke-width="1.0"/><line x1="682.0799999999999" y1="631" x2="1001.28" y2="413.305" stroke="#bcbcbc" stroke-opacity="0.8" stroke-width="1.0"/></svg>
<svg style="left:856px;top:275px;" width="50" height="55" viewBox="0 0 50 55"><path d="M26.50 30.39A12 12 0 1 1 32.32 17.92" fill="none" stroke="#666" stroke-width="9.5"/><path d="M26.50 30.39A12 12 0 1 1 32.32 17.92" fill="none" stroke="#fff" stroke-width="4.2"/><path d="M22.5 18.5H43L32.5 29Z" fill="#fff" stroke="#666" stroke-width="2.5" stroke-linejoin="miter"/><path d="M27 19.8H38.5L32.5 25.5Z" fill="#fff"/><line x1="20.5" y1="35" x2="20.5" y2="52" stroke="#555" stroke-width="1.1"/></svg>
<div class="t" style="left:21.5px;top:293.82px;font-size:21px;color:#c43e1c;">1</div>
<div class="a" style="left:51px;top:294px;width:154px;height:91px;background:#b7472a;border-radius:9px"></div>
<div class="a" style="left:55px;top:298px;width:146px;height:83px;background:#fff;border-radius:6px"></div>
<svg style="left:56px;top:299px;clip-path:inset(0 round 5px)" width="144" height="81" viewBox="0 0 144 81"><defs><linearGradient id="bgt1" x1="0" y1="0" x2="1" y2="1"><stop offset="0" stop-color="#ffffff"/><stop offset="1" stop-color="#fbfbfb"/></linearGradient><linearGradient id="ogt1" x1="0" y1="0" x2="0" y2="1"><stop offset="0" stop-color="#f4b24a"/><stop offset="1" stop-color="#f0a02c"/></linearGradient><linearGradient id="ygt1" x1="0" y1="0" x2="0" y2="1"><stop offset="0" stop-color="#f0a232"/><stop offset="0.4" stop-color="#f5b552"/><stop offset="1" stop-color="#f8bd64"/></linearGradient></defs><rect x="0" y="0" width="144" height="81" fill="url(#bgt1)"/><polygon points="0.00,0.00 9.94,0.00 0.00,66.42" fill="#e96641"/><polygon points="129.17,0.00 144.00,0.00 144.00,81.00 122.54,81.00 137.81,53.38" fill="#e8552b"/><polygon points="140.69,0.00 144.00,0.00 144.00,42.36 137.81,53.38 135.00,35.56" fill="#ea6a3f"/><polygon points="129.17,0.00 140.69,0.00 135.00,35.56 132.48,24.30" fill="#e9692a"/><polygon points="110.45,0.00 129.17,0.00 137.81,53.38 132.77,59.29 128.74,53.05" fill="url(#ogt1)"/><polygon points="110.45,0.00 113.76,0.00 119.52,26.73" fill="#f4b555"/><polygon points="105.62,81.00 122.54,81.00 137.81,53.38 128.74,53.05" fill="url(#ygt1)"/><polygon points="120.31,29.24 128.74,53.05 109.58,75.22" fill="#f3b4a5"/><polygon points="135.22,37.75 137.81,53.38 131.76,64.31" fill="#ee9e6e"/><line x1="110.88" y1="0" x2="125.136" y2="81" stroke="#b0b0b0" stroke-opacity="0.7" stroke-width="0.6"/><line x1="87.696" y1="81" x2="128.736" y2="53.055" stroke="#bcbcbc" stroke-opacity="0.8" stroke-width="0.6"/></svg>
<div class="t" style="left:75px;top:309.80px;font-size:6.5px;color:#808080;font-weight:bold;">HYPERLINKS</div>
<div class="t" style="left:75.5px;top:320.69px;font-size:4.5px;color:#e0603a;">1.</div>
<div class="t" style="left:86px;top:319.76px;font-size:5.6px;color:#4a4a8a;letter-spacing:0.15px">An Existing File</div>
<div class="a" style="left:86px;top:324.8px;width:40px;height:0.8px;background:#5a5a9a"></div>
<div class="t" style="left:75.5px;top:328.69px;font-size:4.5px;color:#e0603a;">2.</div>
<div class="t" style="left:86px;top:327.76px;font-size:5.6px;color:#4a4a8a;letter-spacing:0.15px">Web Page</div>
<div class="a" style="left:86px;top:332.8px;width:25px;height:0.8px;background:#5a5a9a"></div>
<div class="t" style="left:75.5px;top:336.69px;font-size:4.5px;color:#e0603a;">3.</div>
<div class="t" style="left:86px;top:335.76px;font-size:5.6px;color:#4a4a8a;letter-spacing:0.15px">Place in this Document</div>
<div class="a" style="left:86px;top:340.8px;width:59px;height:0.8px;background:#5a5a9a"></div>
<div class="t" style="left:75.5px;top:344.69px;font-size:4.5px;color:#e0603a;">4.</div>
<div class="t" style="left:86px;top:343.76px;font-size:5.6px;color:#4a4a8a;letter-spacing:0.15px">Create New Document</div>
<div class="a" style="left:86px;top:348.8px;width:58px;height:0.8px;background:#5a5a9a"></div>
<div class="t" style="left:75.5px;top:352.69px;font-size:4.5px;color:#e0603a;">5.</div>
<div class="t" style="left:86px;top:351.76px;font-size:5.6px;color:#7a7a7a;letter-spacing:0.15px">Email Address</div>
<div class="t" style="left:20.5px;top:408.22px;font-size:21px;color:#3a3a3a;">2</div>
<div class="a" style="left:55px;top:412px;width:145.5px;height:82.5px;background:#fff;border-radius:6px;box-shadow:0 0 1.5px rgba(0,0,0,.45)"></div>
<svg style="left:55.6px;top:412.4px;clip-path:inset(0 round 6px)" width="144.4" height="81.8" viewBox="0 0 144.4 81.8"><defs><linearGradient id="bgt2" x1="0" y1="0" x2="1" y2="1"><stop offset="0" stop-color="#ffffff"/><stop offset="1" stop-color="#fbfbfb"/></linearGradient><linearGradient id="ogt2" x1="0" y1="0" x2="0" y2="1"><stop offset="0" stop-color="#f4b24a"/><stop offset="1" stop-color="#f0a02c"/></linearGradient><linearGradient id="ygt2" x1="0" y1="0" x2="0" y2="1"><stop offset="0" stop-color="#f0a232"/><stop offset="0.4" stop-color="#f5b552"/><stop offset="1" stop-color="#f8bd64"/></linearGradient></defs><rect x="0" y="0" width="144.4" height="81.8" fill="url(#bgt2)"/><polygon points="0.00,48.18 5.05,81.80 0.00,81.80" fill="#e96641"/><polygon points="129.53,0.00 144.40,0.00 144.40,81.80 122.88,81.80 138.19,53.91" fill="#e8552b"/><polygon points="141.08,0.00 144.40,0.00 144.40,42.78 138.19,53.91 135.38,35.91" fill="#ea6a3f"/><polygon points="129.53,0.00 141.08,0.00 135.38,35.91 132.85,24.54" fill="#e9692a"/><polygon points="110.75,0.00 129.53,0.00 138.19,53.91 133.14,59.88 129.09,53.58" fill="url(#ogt2)"/><polygon points="110.75,0.00 114.08,0.00 119.85,26.99" fill="#f4b555"/><polygon points="105.92,81.80 122.88,81.80 138.19,53.91 129.09,53.58" fill="url(#ygt2)"/><polygon points="120.65,29.53 129.09,53.58 109.89,75.96" fill="#f3b4a5"/><polygon points="135.59,38.12 138.19,53.91 132.13,64.95" fill="#ee9e6e"/><line x1="111.188" y1="0" x2="125.48360000000001" y2="81.8" stroke="#b0b0b0" stroke-opacity="0.7" stroke-width="0.6"/><line x1="87.9396" y1="81.8" x2="129.0936" y2="53.579" stroke="#bcbcbc" stroke-opacity="0.8" stroke-width="0.6"/></svg>
<div class="t" style="left:64.5px;top:421.76px;font-size:5.6px;color:#e86878;">SLIDE TWO</div>
<div class="a" style="left:64.5px;top:440px;width:2px;height:1.5px;background:#e0603a"></div>
<div class="a" style="left:69px;top:440px;width:2px;height:1.5px;background:#7aa0d0"></div>
<div class="a" style="left:379.5px;top:327px;width:948px;height:517.5px;background:#f0f0f0;border:1px solid #8f8f8f;border-radius:9px;box-shadow:0 20px 70px rgba(0,0,0,.42),0 0 26px rgba(0,0,0,.13),0 2px 5px rgba(0,0,0,.1)"></div>
<div class="a" style="left:380.5px;top:328px;width:946px;height:43px;background:#fff;border-radius:8px 8px 0 0"></div>
<div class="t" style="left:392px;top:342.51px;font-size:17.7px;color:#1a1a1a;">Insert Hyperlink</div>
<div class="t" style="left:1218.5px;top:340.98px;font-size:17.5px;color:#222;">?</div>
<svg style="left:1284px;top:340px;" width="17" height="17" viewBox="0 0 17 17"><path d="M1 1L16 16M16 1L1 16" stroke="#1a1a1a" stroke-width="1.3"/></svg>
<div class="t" style="left:417px;top:391.05px;font-size:15.3px;color:#1a1a1a;">Link to:</div>
<div class="a" style="left:389px;top:416px;width:119.5px;height:417px;background:#f0f0f0;border:1px solid #7d8290"></div>
<svg style="left:436px;top:420px;" width="25" height="25" viewBox="0 0 25 25"><path d="M0.5 0.5H9L13 4.5V22H0.5Z" fill="#efede6" stroke="#555" stroke-width="1"/><path d="M13 4.5V22H0.5" fill="none" stroke="#1a1a1a" stroke-width="1.8"/><path d="M9 0.5V4.5H13" fill="#fff" stroke="#444" stroke-width="0.9"/><path d="M2.5 4H6M2.5 7H6M2.5 10H6M2.5 13H6M2.5 16H6M2.5 19H6" stroke="#999" stroke-width="1"/><path d="M6 2.5H19.5L23.5 6.5V23.5H6Z" fill="#fffbe8" stroke="#555" stroke-width="1"/><path d="M23.5 6.5V23.5H6" fill="none" stroke="#1a1a1a" stroke-width="1.8"/><path d="M19.5 2.5V6.5H23.5" fill="#fff" stroke="#444" stroke-width="0.9"/><rect x="8.5" y="6" width="12" height="14" fill="none" stroke="#f0d040" stroke-width="1.2" stroke-dasharray="1.2 1.2"/><rect x="10" y="8" width="9" height="10" fill="#111"/><circle cx="14.5" cy="13" r="3.6" fill="#22c060"/><path d="M12 11.5C13.5 10.5 16 11 17.5 13.5M13 15.5L16.5 11" stroke="#30d0f0" stroke-width="1.5" fill="none"/></svg>
<div class="t" style="left:248.5px;width:400px;text-align:center;top:448.55px;font-size:15.3px;color:#1a1a1a;">E<u>x</u>isting File or</div>
<div class="t" style="left:248.5px;width:400px;text-align:center;top:468.45px;font-size:15.3px;color:#1a1a1a;">Web Page</div>
<svg style="left:437px;top:501px;" width="24" height="25" viewBox="0 0 24 25"><path d="M4.5 0.5H18.5L22.5 4.5V24H4.5Z" fill="#f7f5ef" stroke="#555" stroke-width="1"/><path d="M22.5 4.5V24H4.5" fill="none" stroke="#1a1a1a" stroke-width="1.8"/><path d="M18.5 0.5V4.5H22.5" fill="#fff" stroke="#444" stroke-width="0.9"/><path d="M6.5 4H10.5M6.5 11.5H10.5M12.5 17.5H19.5" stroke="#3a78e0" stroke-width="1.3"/><path d="M8 7H11M8 14H11M8 20H11" stroke="#aaa" stroke-width="1"/><rect x="12.5" y="7" width="6.5" height="7" fill="#e6e6e6" stroke="#aaa" stroke-width="1"/><path d="M6 5C2.5 6 1.5 10 2.5 13.5L3.5 16" fill="none" stroke="#1a50d8" stroke-width="2.6"/><path d="M0 14.5L4.5 20.5L8.5 13.5Z" fill="#1a50d8"/></svg>
<div class="t" style="left:248.5px;width:400px;text-align:center;top:529.25px;font-size:15.3px;color:#1a1a1a;">Pl<u>a</u>ce in This</div>
<div class="t" style="left:248.5px;width:400px;text-align:center;top:550.05px;font-size:15.3px;color:#1a1a1a;">Document</div>
<svg style="left:436px;top:581px;" width="25" height="25" viewBox="0 0 25 25"><path d="M5.5 1.5H19.5L23.5 5.5V24H5.5Z" fill="#f7f5ef" stroke="#555" stroke-width="1"/><path d="M23.5 5.5V24H5.5" fill="none" stroke="#1a1a1a" stroke-width="1.8"/><path d="M19.5 1.5V5.5H23.5" fill="#fff" stroke="#444" stroke-width="0.9"/><path d="M8 15.5H20.5M8 18.5H20.5M8 21.5H20.5" stroke="#b8b8b8" stroke-width="1"/><rect x="13.5" y="6" width="6.5" height="7" fill="#eee" stroke="#aaa" stroke-width="1"/><path d="M7.5 7L10.5 10M10.5 7L7.5 10" stroke="#888" stroke-width="1"/><path d="M0.5 0.5L10 10M10 0.5L0.5 10M5.2 0V10.5M0 5.2H10.5" stroke="#f2d000" stroke-width="1.4"/></svg>
<div class="t" style="left:248.5px;width:400px;text-align:center;top:610.35px;font-size:15.3px;color:#1a1a1a;">Create <u>N</u>ew</div>
<div class="t" style="left:248.5px;width:400px;text-align:center;top:630.65px;font-size:15.3px;color:#1a1a1a;">Document</div>
<div class="a" style="left:385.8px;top:657.5px;width:122px;height:86.5px;background:#cce8ff;border:4px solid #000;border-radius:4px"></div>
<svg style="left:436px;top:677px;" width="25" height="25" viewBox="0 0 25 25"><path d="M6.5 0.5H19.5L23.5 4.5V23.5H6.5Z" fill="#f7f5ef" stroke="#555" stroke-width="1"/><path d="M23.5 4.5V23.5H6.5" fill="none" stroke="#1a1a1a" stroke-width="1.8"/><path d="M19.5 0.5V4.5H23.5" fill="#fff" stroke="#444" stroke-width="0.9"/><path d="M9 5H14M9 8H14M9 11H20M9 14H20M18 5V20" stroke="#b0b0b0" stroke-width="1"/><rect x="0.8" y="13" width="15.5" height="10.5" fill="#fbf3c8" stroke="#222" stroke-width="1.3"/><path d="M2 15L5 18L8 15L11 18L14 15M2 22L5 19L8 22L11 19L14 22" fill="none" stroke="#e0c030" stroke-width="1" stroke-dasharray="1 0.8"/></svg>
<div class="t" style="left:248.5px;width:400px;text-align:center;top:705.65px;font-size:15.3px;color:#1a1a1a;">E-<u>m</u>ail Address</div>
<div class="t" style="left:522.7px;top:391.05px;font-size:15.3px;color:#1a1a1a;"><u>T</u>ext to display:</div>
<div class="a" style="left:629px;top:382px;width:547px;height:31.5px;background:#fff;border:1px solid #a2a2a2"></div>
<div class="t" style="left:632.5px;top:388.41px;font-size:15.1px;color:#1a1a1a;">Email Address</div>
<div class="a" style="left:1190.5px;top:382px;width:126px;height:35.5px;background:#fdfdfd;border:1px solid #d0d0d0;border-radius:4px;border-bottom-color:#b8b8b8"></div>
<div class="t" style="left:1215.5px;top:393.25px;font-size:14.7px;color:#1a1a1a;">ScreenTi<u>p</u>...</div>
<div class="a" style="left:522px;top:424px;width:796px;height:1px;background:#dcdcdc"></div>
<div class="t" style="left:522.7px;top:440.65px;font-size:15.3px;color:#1a1a1a;"><u>E</u>-mail address:</div>
<div class="a" style="left:522px;top:463px;width:654px;height:31.5px;background:#fff;border:1px solid #a2a2a2"></div>
<div class="t" style="left:525.5px;top:469.83px;font-size:15.55px;color:#1a1a1a;">mailto:contact@obintusacademy.com</div>
<div class="t" style="left:522.7px;top:503.75px;font-size:15.3px;color:#1a1a1a;">S<u>u</u>bject:</div>
<div class="a" style="left:522px;top:526px;width:654px;height:32px;background:#fff;border:1px solid #a2a2a2"></div>
<div class="t" style="left:525.5px;top:532.85px;font-size:15.3px;color:#1a1a1a;">Request For Tutorial</div>
<div class="t" style="left:522.7px;top:567.05px;font-size:15.3px;color:#1a1a1a;">Re<u>c</u>ently used e-mail addresses:</div>
<div class="a" style="left:522px;top:589px;width:654px;height:171.5px;background:#fff;border:1px solid #7d8290"></div>
<div class="a" style="left:1149px;top:590px;width:26px;height:169.5px;background:#f0f0f0"></div>
<svg style="left:1155.5px;top:600px;" width="13" height="9" viewBox="0 0 13 9"><path d="M6.2 1L11.5 7.5H1Z" fill="#a0a0a0" stroke="#a0a0a0" stroke-width="1.2" stroke-linejoin="round"/></svg>
<svg style="left:1155.5px;top:742px;" width="13" height="9" viewBox="0 0 13 9"><path d="M6.2 8L11.5 1.5H1Z" fill="#a0a0a0" stroke="#a0a0a0" stroke-width="1.2" stroke-linejoin="round"/></svg>
<svg style="left:1152.5px;top:466.5px;" width="68.79999999999995" height="20" viewBox="0 0 68.79999999999995 20"><path d="M2 10L24 2.5L19 10L24 17.5Z" fill="#000"/><line x1="18" y1="10" x2="49.299999999999955" y2="10" stroke="#000" stroke-width="3.2"/><circle cx="56.799999999999955" cy="10" r="7" fill="none" stroke="#000" stroke-width="3.2"/></svg>
<svg style="left:1154px;top:532.3px;" width="67" height="20" viewBox="0 0 67 20"><path d="M2 10L24 2.5L19 10L24 17.5Z" fill="#000"/><line x1="18" y1="10" x2="47.5" y2="10" stroke="#000" stroke-width="3.2"/><circle cx="55" cy="10" r="7" fill="none" stroke="#000" stroke-width="3.2"/></svg>
<div class="a" style="left:1068.9px;top:789px;width:128.5px;height:50.5px;border:4.5px solid #000;border-radius:4px"></div>
<div class="a" style="left:1078px;top:796.3px;width:112px;height:35.5px;background:#fdfdfd;border:1.3px solid #0067c0;border-radius:4px"></div>
<div class="t" style="left:1123.4px;top:807.64px;font-size:14.6px;color:#1a1a1a;">OK</div>
<div class="a" style="left:1205px;top:796.3px;width:112px;height:35.5px;background:#fdfdfd;border:1px solid #d0d0d0;border-bottom-color:#b8b8b8;border-radius:4px"></div>
<div class="t" style="left:1237.8px;top:807.47px;font-size:14.8px;color:#1a1a1a;">Cancel</div>
<div class="t" style="left:23px;top:683.96px;font-size:27.8px;color:#000;font-weight:bold;">Email Address</div>
<div class="a" style="left:221.5px;top:700.5px;width:146px;height:3.6px;background:#000"></div>
<svg style="left:362px;top:693px;" width="26" height="18" viewBox="0 0 26 18"><path d="M24.5 9L1 0.5L6 9L1 17.5Z" fill="#000"/></svg>
<div class="t" style="left:866.5px;top:800.99px;font-size:26.7px;color:#000;font-weight:bold;">OK Button</div>
<div class="a" style="left:1005.3px;top:812.7px;width:38px;height:3.6px;background:#000"></div>
<svg style="left:1037px;top:805.5px;" width="26" height="18" viewBox="0 0 26 18"><path d="M24.5 9L1 1L6 9L1 17Z" fill="#000"/></svg>
</body></html>
